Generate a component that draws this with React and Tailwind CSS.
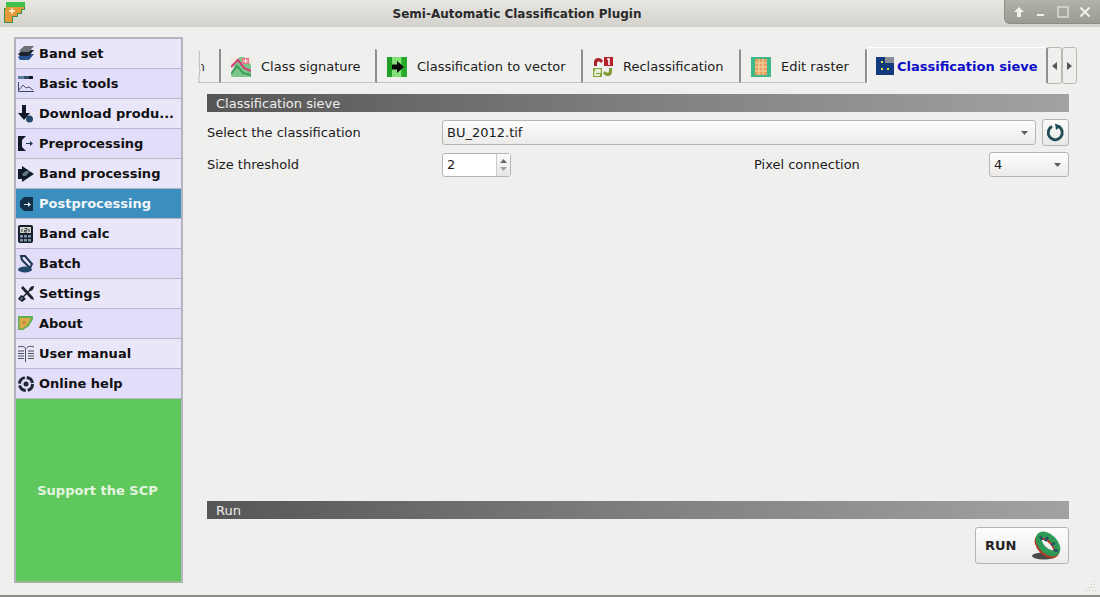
import React from 'react';

const BandSetIcon = () => (
  <svg width="18" height="18" viewBox="0 0 18 18">
    <path d="M1 12 L6 9 H17 L12 15 H3 Z" fill="#27518f" />
    <path d="M1 9 L6 5 H17 L12 11 H3 Z" fill="#1c2430" />
    <path d="M2 6 L7 1 H17 L12 7 H4 Z" fill="#6d7278" />
  </svg>
);

const BasicToolsIcon = () => (
  <svg width="18" height="18" viewBox="0 0 18 18">
    <rect x="1" y="1" width="6" height="3" fill="#5f7f9f" />
    <rect x="7" y="1" width="5" height="3" fill="#3a4f6a" />
    <rect x="12" y="1" width="4" height="3" fill="#111827" />
    <path d="M1.5 7 V16.5 H17" fill="none" stroke="#3b4a5a" />
    <path d="M2 15 L6 10 L9 13 L12 12 L16 15" fill="none" stroke="#4b5563" />
  </svg>
);

const DownloadIcon = () => (
  <svg width="18" height="18" viewBox="0 0 18 18">
    <path d="M5 0 H9 V8 H13 L7 15 L1 8 H5 Z" fill="#111a26" />
    <circle cx="12.5" cy="14" r="3.5" fill="#24486b" />
  </svg>
);

const PreprocessIcon = () => (
  <svg width="18" height="18" viewBox="0 0 18 18">
    <path d="M1 1 H9 L5 5 V12 L9 16 H1 Z" fill="#111a26" />
    <path d="M9 8 H13 V6 L16 8.5 L13 11 V9 H9 Z" fill="#24384f" />
  </svg>
);

const BandProcessIcon = () => (
  <svg width="18" height="18" viewBox="0 0 18 18">
    <path d="M5 1 V4 H1 V14 H5 V17 L17 9 Z" fill="#111a26" />
    <path d="M5 9 L9 6 H13 L9 11 H6 Z" fill="#5f7488" />
  </svg>
);

const PostprocessIcon = () => (
  <svg width="18" height="18" viewBox="0 0 18 18">
    <path d="M7 2 H16 V16 H7 L3 12 V6 Z" fill="#12304a" />
    <path d="M7 9 H11 V7 L14 9.5 L11 12 V10 H7 Z" fill="#d7e3ec" />
  </svg>
);

const BandCalcIcon = () => (
  <svg width="18" height="18" viewBox="0 0 18 18">
    <rect x="1" y="0" width="15" height="18" rx="2" fill="#16202c" />
    <rect x="3" y="2" width="11" height="6" fill="#d6d6cc" />
    <path d="M5 7 V4 M7.5 3.5 H10 V5.5 H7.5 V7 H10 M12 7 V4" stroke="#16202c" strokeWidth="0.8" fill="none" />
    <rect x="3" y="10" width="3" height="2.5" fill="#7f93aa" />
    <rect x="7" y="10" width="3" height="2.5" fill="#7f93aa" />
    <rect x="11" y="10" width="3" height="2.5" fill="#7f93aa" />
    <rect x="3" y="14" width="3" height="2.5" fill="#7f93aa" />
    <rect x="7" y="14" width="3" height="2.5" fill="#7f93aa" />
    <rect x="11" y="14" width="3" height="2.5" fill="#7f93aa" />
  </svg>
);

const BatchIcon = () => (
  <svg width="18" height="18" viewBox="0 0 18 18">
    <path d="M4 1 L8 1 L15 9 L13 13 L9 9 L5 5 Z" fill="none" stroke="#1c3550" strokeWidth="2" />
    <ellipse cx="8" cy="14.5" rx="7" ry="3" fill="#24486b" />
  </svg>
);

const SettingsIcon = () => (
  <svg width="18" height="18" viewBox="0 0 18 18">
    <path d="M4 3 L6 1 L16 12 L17 15 L14 14 Z" fill="#1b232d" />
    <path d="M17 1 C17 4 15 6 13 6 L7 12 L9 14 L5 17 L1 14 L4 10 L6 11 L12 5 C12 3 14 1 17 1 Z" fill="#1b232d" />
    <path d="M3 14 L5 12 L6 13 L4 15 Z" fill="#7b8794" />
  </svg>
);

const AboutIcon = () => (
  <svg width="18" height="18" viewBox="0 0 18 18">
    <path d="M1 1 H16 V4 L12 11 L6 15 H1 Z" fill="#5fb04e" />
    <path d="M2.5 3 H14 L10.5 10 L5.5 13.5 H2.5 Z" fill="#d9a94a" />
    <circle cx="7" cy="7.5" r="1.6" fill="#b9853a" />
  </svg>
);

const ManualIcon = () => (
  <svg width="18" height="18" viewBox="0 0 18 18" fill="none" stroke="#4a5058">
    <path d="M8.5 3 V17 M9.5 3 C11 1 14 1 17 2 M8.5 3 C7 1 4 1 1 2" />
    <path d="M1 6 H7 M1 8.5 H7 M1 11 H7 M1 13.5 H7 M11 6 H17 M11 8.5 H17 M11 11 H17 M11 13.5 H17" />
  </svg>
);

const HelpIcon = () => (
  <svg width="18" height="18" viewBox="0 0 18 18">
    <circle cx="9" cy="9" r="6.5" fill="none" stroke="#1d2733" strokeWidth="3" strokeDasharray="8.2 2" />
    <circle cx="9" cy="9" r="2.5" fill="#1d2733" />
  </svg>
);

const LogoIcon = () => (
  <svg width="26" height="24" viewBox="0 0 26 24">
    <path d="M6 2 H25 V10 H22 V14 H18 V17 H13 V23 H4 V8 H6 Z" fill="#3d8f4e" />
    <path d="M6 2 H25 V7 H6 Z" fill="#3fc24a" />
    <path d="M6 7 H24 V9 H21 V13 H17 V16 H12 V22 H5 V9 H6 Z" fill="#e39a37" />
    <path d="M9 11 H15 M12 8 V14" stroke="#f8f2dc" strokeWidth="1.4" />
  </svg>
);

const items = [
  ['Band set', BandSetIcon],
  ['Basic tools', BasicToolsIcon],
  ['Download produ...', DownloadIcon],
  ['Preprocessing', PreprocessIcon],
  ['Band processing', BandProcessIcon],
  ['Postprocessing', PostprocessIcon],
  ['Band calc', BandCalcIcon],
  ['Batch', BatchIcon],
  ['Settings', SettingsIcon],
  ['About', AboutIcon],
  ['User manual', ManualIcon],
  ['Online help', HelpIcon],
];

const SideItem = ({ label, Icon, index }) => {
  const active = label === 'Postprocessing';
  const bg = active ? 'bg-[#3b8fbe] text-[#f2f6f8]' : index % 2 ? 'bg-[#e2ddf9] text-[#101010]' : 'bg-[#e9e6f9] text-[#101010]';
  return (
    <div className={`h-[30px] flex items-center pl-[1px] border-b border-[#b9b7c9] font-bold text-[13px] ${bg}`}>
      <span className="w-[18px] h-[18px] flex items-center justify-center shrink-0">
        <Icon />
      </span>
      <span className="ml-[4px] whitespace-nowrap">{label}</span>
    </div>
  );
};

const ClassSignatureIcon = () => (
  <svg width="20" height="20" viewBox="0 0 20 20">
    <rect x="0" y="0" width="20" height="20" fill="#efe6dc" />
    <path d="M0 20 L5 3 L9 0 L13 0 L20 8 V20 Z" fill="#7cc48a" />
    <path d="M0 10 L7 3 L13 11 L20 14" fill="none" stroke="#d63a7a" strokeWidth="2" />
    <path d="M0 17 L6 9 L12 16 L20 18" fill="none" stroke="#3aa05a" strokeWidth="2" />
    <rect x="11" y="1" width="7" height="6" fill="#e87a8a" />
    <path d="M12 4 H17 M14.5 2 V6" stroke="#fff" />
  </svg>
);

const ToVectorIcon = () => (
  <svg width="20" height="20" viewBox="0 0 20 20">
    <rect width="20" height="20" fill="#38c232" />
    <rect x="0" y="0" width="5" height="20" fill="#1f9e28" />
    <rect x="15" y="0" width="5" height="20" fill="#2aa82e" />
    <rect x="5" y="0" width="9" height="20" fill="#84e078" />
    <path d="M5 7.5 H10 V4 L17 10 L10 16 V12.5 H5 Z" fill="#0a0a0a" />
  </svg>
);

const ReclassIcon = () => (
  <svg width="20" height="20" viewBox="0 0 20 20">
    <path d="M1 9 V5 C1 0 8 0 10 4 L8 6 C7 4 4 4 4 6 V9 Z" fill="#a8242a" />
    <rect x="11" y="0" width="9" height="9" fill="#b8202a" />
    <rect x="0" y="11" width="9" height="9" fill="#84a83a" />
    <path d="M19 11 V15 C19 20 12 20 10 16 L12 14 C13 16 16 16 16 14 V11 Z" fill="#7f9a36" />
    <path d="M14 2 H16 V8" fill="none" stroke="#fff" strokeWidth="1.6" />
    <path d="M2 13 H7 V15 H2 V18 H7" fill="none" stroke="#fff" strokeWidth="1.3" />
  </svg>
);

const EditRasterIcon = () => (
  <svg width="20" height="20" viewBox="0 0 20 20">
    <rect width="20" height="20" fill="#3fb88a" />
    <rect x="4" y="2" width="12" height="16" fill="#e8a060" />
    <path d="M4 6 H16 M4 10 H16 M4 14 H16 M8 2 V18 M12 2 V18" stroke="#f4d8a8" />
  </svg>
);

const SieveIcon = () => (
  <svg width="18" height="18" viewBox="0 0 18 18">
    <rect width="18" height="18" fill="#8a8f96" />
    <path d="M0 0 H9 V6 H18 V18 H0 Z" fill="#123a7c" />
    <rect x="5" y="4" width="2" height="2" fill="#e8e84a" />
    <rect x="5" y="11" width="2" height="2" fill="#e8e84a" />
    <rect x="11" y="11" width="2" height="2" fill="#e8e84a" />
  </svg>
);

const Tab = ({ Icon, label, w }) => (
  <div className={`h-[34px] pt-[2px] shrink-0 flex items-center border-r-2 border-[#8f8f8d] rounded-tr-[2px] border-b border-b-[#c4c4c2] ${w}`}>
    <span className="ml-[10px] w-[20px] flex justify-center shrink-0">
      <Icon />
    </span>
    <span className="ml-[10px] whitespace-nowrap">{label}</span>
  </div>
);

const Caret = () => (
  <svg width="7" height="4" viewBox="0 0 7 4">
    <path d="M0 0 H7 L3.5 4 Z" fill="#5e5e5e" />
  </svg>
);

const SectionBar = ({ label }) => (
  <div className="h-[18px] pt-[1px] shrink-0 pl-[9px] flex items-center text-[13px] text-[#eeeeee] bg-gradient-to-r from-[#565656] via-[#7f7f7f] to-[#a2a2a2]">
    {label}
  </div>
);

const RunIcon = () => (
  <svg width="30" height="30" viewBox="0 0 30 30">
    <ellipse cx="13" cy="25" rx="12" ry="3.5" fill="#4a4a48" />
    <ellipse cx="16" cy="15" rx="11.5" ry="6.5" transform="rotate(45 16 15)" fill="none" stroke="#b03a28" strokeWidth="6" />
    <ellipse cx="17" cy="13" rx="11.5" ry="6.5" transform="rotate(45 17 13)" fill="none" stroke="#2f9a58" strokeWidth="6" />
    <path d="M9 5 L11 9 M17 6 L14 10 M24 12 L20 14 M27 20 L23 19" stroke="#26506a" strokeWidth="2.5" />
  </svg>
);

export default function App() {
  return (
    <div className="relative w-[1100px] h-[597px] overflow-hidden bg-[#efefed] text-[13px] text-[#1c1c1c] flex flex-col border-b-2 border-[#8c8c88]" style={{ fontFamily: '"DejaVu Sans", sans-serif' }}>
      <div className="h-[27px] shrink-0 flex items-start bg-gradient-to-b from-[#e7e6e1] to-[#d3d2cc]">
        <span className="w-[26px] h-[24px] shrink-0">
          <LogoIcon />
        </span>
        <div className="flex-1 pl-[4px] h-[27px] flex items-center justify-center font-bold text-[12px] text-[#2a2a2a]">
          Semi-Automatic Classification Plugin
        </div>
        <div className="w-[96px] h-[24px] shrink-0 rounded-bl-[6px] border border-t-0 border-r-0 border-[#8d8d86] bg-gradient-to-b from-[#b3b2aa] to-[#9c9b93] flex items-center">
          <svg className="ml-[8px]" width="12" height="12" viewBox="0 0 12 12">
            <path d="M6 1 L11 6 H8 V11 H4 V6 H1 Z" fill="#f0f0ea" />
          </svg>
          <svg className="ml-[11px]" width="10" height="12" viewBox="0 0 10 12">
            <rect x="1" y="8" width="7" height="2" fill="#f0f0ea" />
          </svg>
          <svg className="ml-[11px]" width="12" height="12" viewBox="0 0 12 12">
            <rect x="1" y="1" width="10" height="10" fill="none" stroke="#dcdcd6" strokeWidth="1.5" />
            <rect x="3.5" y="3.5" width="5" height="5" fill="#a8a79f" />
          </svg>
          <svg className="ml-[10px]" width="12" height="12" viewBox="0 0 12 12">
            <path d="M1.5 1.5 L10.5 10.5 M10.5 1.5 L1.5 10.5" stroke="#f0f0ea" strokeWidth="2" />
          </svg>
        </div>
      </div>

      <div className="flex-1 min-h-0 flex pl-[14px] pt-[10px]">
        <aside className="w-[169px] h-[546px] shrink-0 border-2 border-[#b4b4c0] border-b-[#9fb79f] flex flex-col">
          {items.map(([label, Icon], i) => (
            <SideItem key={label} label={label} Icon={Icon} index={i} />
          ))}
          <div className="flex-1 pt-[2px] pr-[2px] bg-[#5fc85c] flex items-center justify-center font-bold text-[13px] text-[#e4f4e0]">
            Support the SCP
          </div>
        </aside>

        <main className="ml-[15px] flex-1 min-w-0 flex flex-col pr-[22px]">
          <div className="h-[46px] pt-[12px] flex items-start shrink-0 text-[13px]">
            <div className="w-[23px] h-[34px] pt-[2px] shrink-0 flex items-center border-r-2 border-[#8f8f8d] text-[#3a3a3a] border-b border-b-[#c4c4c2]">
              <svg className="shrink-0" width="3" height="31" viewBox="0 0 3 33" fill="none">
                <path d="M1 0 C3 6 0 10 1.5 16 C3 22 0 27 1 33" stroke="#b5b5b3" />
              </svg>
              <span className="w-[4px] flex justify-end overflow-hidden">n</span>
            </div>
            <Tab Icon={ClassSignatureIcon} label="Class signature" w="w-[156px]" />
            <Tab Icon={ToVectorIcon} label="Classification to vector" w="w-[206px]" />
            <Tab Icon={ReclassIcon} label="Reclassification" w="w-[158px]" />
            <Tab Icon={EditRasterIcon} label="Edit raster" w="w-[126px]" />
            <div className="h-[37px] shrink-0 -mt-[2px] w-[179px] pl-[8px] flex items-start pt-[9px] font-bold text-[#0c0cc8] border-t border-l border-white rounded-t-[2px] whitespace-nowrap">
              <SieveIcon />
              <span className="ml-[3px]">Classification sieve</span>
            </div>
            <div className="w-[16px] h-[37px] shrink-0 -mt-[2px] border border-[#b9b9b6] border-l-2 border-l-[#8f8f8d] rounded-[3px] flex items-center justify-center">
              <svg width="5" height="8" viewBox="0 0 5 8"><path d="M5 0 V8 L0 4 Z" fill="#555" /></svg>
            </div>
            <div className="w-[15px] h-[37px] shrink-0 -mt-[2px] border border-[#b9b9b6] rounded-[3px] flex items-center justify-center">
              <svg width="5" height="8" viewBox="0 0 5 8"><path d="M0 0 V8 L5 4 Z" fill="#555" /></svg>
            </div>
          </div>

          <div className="ml-[9px] mr-[9px] mt-[11px] flex-1 min-h-0 flex flex-col">
            <SectionBar label="Classification sieve" />

            <div className="mt-[8px] flex items-center h-[25px]">
              <span className="w-[235px] shrink-0">Select the classification</span>
              <div className="flex-1 h-[25px] border border-[#b5b5b3] rounded-[3px] bg-gradient-to-b from-[#fdfdfc] to-[#ecebea] flex items-center pl-[4px] pr-[7px] justify-between">
                <span>BU_2012.tif</span>
                <Caret />
              </div>
              <div className="ml-[6px] w-[27px] h-[27px] shrink-0 border border-[#b5b5b3] rounded-[3px] bg-gradient-to-b from-[#fcfcfb] to-[#e8e8e6] flex items-center justify-center">
                <svg width="19" height="19" viewBox="0 0 19 19" fill="none">
                  <path d="M12.5 3.6 A7 7 0 1 1 6 3.6" stroke="#214c55" strokeWidth="2.8" />
                  <path d="M9 0.5 L15 3 L10 7 Z" fill="#214c55" />
                </svg>
              </div>
            </div>

            <div className="mt-[7px] flex items-center h-[25px]">
              <span className="w-[235px] shrink-0">Size threshold</span>
              <div className="w-[69px] h-[24px] border border-[#b5b5b3] rounded-[3px] bg-white flex items-stretch">
                <span className="flex-1 pl-[4px] flex items-center">2</span>
                <div className="w-[14px] border-l border-[#c9c9c7] bg-gradient-to-b from-[#fbfbfa] to-[#e6e6e4] flex flex-col items-center justify-center gap-[4px]">
                  <svg width="7" height="4" viewBox="0 0 7 4"><path d="M0 4 H7 L3.5 0 Z" fill="#666" /></svg>
                  <svg width="7" height="4" viewBox="0 0 7 4"><path d="M0 0 H7 L3.5 4 Z" fill="#a0a0a0" /></svg>
                </div>
              </div>
              <span className="ml-[243px]">Pixel connection</span>
              <div className="ml-auto w-[80px] h-[25px] border border-[#b5b5b3] rounded-[3px] bg-gradient-to-b from-[#fdfdfc] to-[#ecebea] flex items-center justify-between pl-[4px] pr-[7px]">
                <span>4</span>
                <Caret />
              </div>
            </div>

            <div className="flex-1" />
            <SectionBar label="Run" />
            <div className="mt-[8px] mb-[31px] flex justify-end">
              <div className="w-[94px] h-[37px] border border-[#b5b5b3] rounded-[3px] bg-gradient-to-b from-[#fdfdfc] to-[#ebebe9] flex items-center justify-between pl-[9px] pr-[7px] font-bold text-[#222]">
                <span>RUN</span>
                <RunIcon />
              </div>
            </div>
          </div>
        </main>
      </div>

      <svg className="absolute right-[3px] bottom-[3px]" width="11" height="11" viewBox="0 0 11 11" fill="#c4c4c0">
        <rect x="8" y="0" width="1" height="1" />
        <rect x="5" y="3" width="1" height="1" />
        <rect x="8" y="3" width="1" height="1" />
        <rect x="2" y="6" width="1" height="1" />
        <rect x="5" y="6" width="1" height="1" />
        <rect x="8" y="6" width="1" height="1" />
        <rect x="0" y="9" width="1" height="1" />
        <rect x="3" y="9" width="1" height="1" />
        <rect x="6" y="9" width="1" height="1" />
        <rect x="9" y="9" width="1" height="1" />
      </svg>
    </div>
  );
}
